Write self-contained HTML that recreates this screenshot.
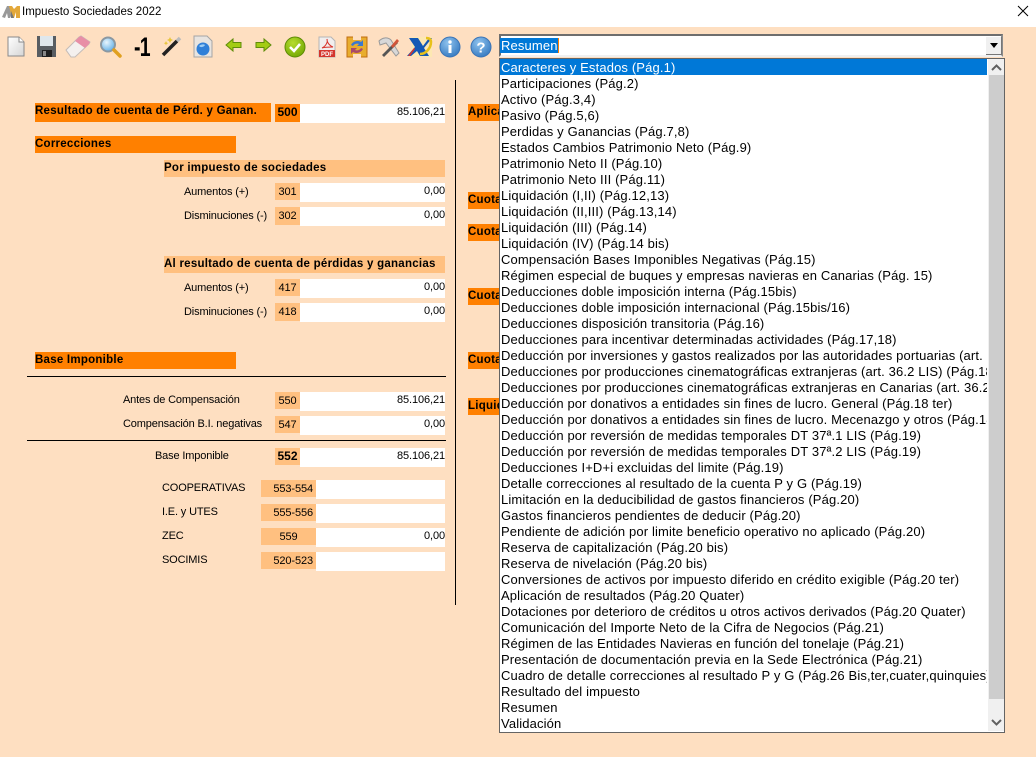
<!DOCTYPE html>
<html lang="es">
<head>
<meta charset="utf-8">
<title>Impuesto Sociedades 2022</title>
<style>
html,body{margin:0;padding:0}
body{width:1036px;height:758px;overflow:hidden;background:#fff;position:relative;font-family:"Liberation Sans",sans-serif;color:#000}
div{position:absolute;white-space:nowrap}
#bg{left:0;top:27px;width:1036px;height:730px;background:#FEDFC1}
.t{font-size:11px;line-height:18px;letter-spacing:-.15px}
.b{font-weight:bold;font-size:11.5px;letter-spacing:.25px}
.o{background:#FF8000}
.p{background:#FFC080}
.w{background:#fff;text-align:right;font-size:11px;line-height:17px;letter-spacing:-.1px}
.c{text-align:center;font-size:11px;line-height:18px;letter-spacing:-.1px}
.k{background:#000}
#list{left:499px;top:58px;height:673px;background:#fff;border:1px solid #646464;box-sizing:content-box;overflow:hidden;width:504px}
#rows{left:0;top:0;width:487px;height:672px;overflow:hidden}
#rows p{margin:0;height:16px;line-height:18px;padding-left:1px;font-size:13px;letter-spacing:.14px;white-space:nowrap}
#rows p.s{background:#0078D7;color:#fff}
</style>
</head>
<body>
<div id="bg"></div>

<svg style="position:absolute;left:2px;top:5px" width="19" height="14" viewBox="0 0 19 14"><path d="M0 12 5 1h3l3 6-3 6H6L5 8l-2 5z" fill="#999"/><path d="M7 1h3l2 3 3-3h3v12h-4V7l-2 6h-2z" fill="#e3a83a"/><path d="M9 6l3 7h-3z" fill="#777"/></svg>
<div style="left:22px;top:4px;font-size:11.5px;line-height:16px">Impuesto Sociedades 2022</div>
<svg style="position:absolute;left:1017px;top:5px" width="12" height="12" viewBox="0 0 12 12"><path d="M1 1l10 10M11 1 1 11" stroke="#000" stroke-width="1"/></svg>

<svg style="position:absolute;left:0;top:27px" width="500" height="36" viewBox="0 27 500 36">
<defs>
<linearGradient id="pg" x1="0" y1="0" x2="1" y2="1"><stop offset="0" stop-color="#fff"/><stop offset="1" stop-color="#d5d5d5"/></linearGradient>
<radialGradient id="blue" cx=".4" cy=".3" r=".8"><stop offset="0" stop-color="#8fc3ee"/><stop offset="1" stop-color="#2f74bd"/></radialGradient>
<radialGradient id="green" cx=".4" cy=".3" r=".8"><stop offset="0" stop-color="#b5dc2e"/><stop offset="1" stop-color="#6fa400"/></radialGradient>
<radialGradient id="lens" cx=".4" cy=".35" r=".7"><stop offset="0" stop-color="#e8f5fd"/><stop offset="1" stop-color="#5eaee6"/></radialGradient>
</defs>
<!-- new -->
<path d="M8 37h11l5 5v14H8z" fill="url(#pg)" stroke="#8a8a8a"/><path d="M19 37v5h5" fill="#fff" stroke="#8a8a8a"/>
<!-- save -->
<path d="M37 36h19v21H37z" fill="#585d62"/><rect x="40" y="36" width="13" height="10" fill="#dfe7ec"/><rect x="42" y="50" width="10" height="7" fill="#202020"/><rect x="43" y="51" width="3" height="5" fill="#888"/>
<!-- eraser -->
<path d="M66 50l13-13 2-1 9 6-1 2-14 13h-4z" fill="#f4f0ee" stroke="#c4bcb8"/><path d="M75 41l4-4 2-1 9 6-1 2-4 4z" fill="#e88ea6"/>
<!-- search -->
<circle cx="108" cy="44.500" r="7" fill="url(#lens)" stroke="#8b98a2" stroke-width="2"/><path d="M114 50l6 6" stroke="#e0a020" stroke-width="3.500" stroke-linecap="round"/>
<!-- wand -->
<path d="M163 55l14-14" stroke="#222" stroke-width="3.500"/><path d="M177 41l3-3" stroke="#bbb" stroke-width="3.500"/><path d="M170 37l1 2 2 1-2 1-1 2-1-2-2-1 2-1z" fill="#e8c53a"/><path d="M166 41l.7 1.500 1.500.7-1.500.7-.7 1.500-.7-1.500-1.500-.7 1.500-.7z" fill="#e8c53a"/>
<!-- globe doc -->
<path d="M194 36h13l5 5v16h-18z" fill="#e8e4e0" stroke="#a5a5a5"/><circle cx="203" cy="49" r="6.500" fill="#2f7fd8"/><path d="M199 46c2-2 5-2 6-1-1 2-4 3-6 1z" fill="#9dcdf4"/>
<!-- left arrow -->
<path d="M226 45l7-6v3.500h8v5h-8V51z" fill="#a4cc14" stroke="#5f8c0a"/>
<!-- right arrow -->
<path d="M271 45l-7-6v3.500h-8v5h8V51z" fill="#a4cc14" stroke="#5f8c0a"/>
<!-- check -->
<circle cx="295" cy="47" r="10" fill="url(#green)" stroke="#5d8a05"/><path d="M290 47l4 4 6-7" fill="none" stroke="#fff" stroke-width="2.500"/>
<!-- pdf -->
<path d="M319 37h12l4 4v16h-16z" fill="#f1eeee" stroke="#b5b5b5"/><path d="M322 48c4-2 6-6 5-9 0 4 3 7 6 8-4 0-8 0-11 1z" fill="none" stroke="#d8342c"/><rect x="319" y="50" width="16" height="7" fill="#d4352d"/>
<text x="327" y="56" font-family="Liberation Sans" font-weight="bold" font-size="6" fill="#fff" text-anchor="middle">PDF</text>
<!-- transfer -->
<rect x="347" y="37" width="20" height="20" fill="#e8ad2e" stroke="#c06c10"/><rect x="353" y="36" width="8" height="4" fill="#FEDFC1"/><rect x="353" y="54" width="8" height="4" fill="#FEDFC1"/><path d="M351 45c2-4 7-5 10-3l2-2v6h-6l2-2c-2-1-5 0-6 2z" fill="#3a78d0"/><path d="M363 49c-2 4-7 5-10 3l-2 2v-6h6l-2 2c2 1 5 0 6-2z" fill="#a84a6a"/>
<!-- tools -->
<path d="M379 41c4-4 9-4 12-1l8 13-3 3-10-13-3 1-3 1z" fill="#d8d8d8" stroke="#9a9a9a"/><path d="M382 55l14-14 2 2-14 14z" fill="#555"/><path d="M391 46l6-7 2 2-6 7z" fill="#d2553a"/>
<!-- AEAT -->
<rect x="412" y="37" width="20" height="20" fill="#fbeea8" opacity=".6"/><path d="M409 38h9l5 8 6-8h3l-8 10 5 8h-9l-3-5-6 5h-4l8-9z" fill="#1459b5"/><path d="M408 56l6-8 1 1-5 7z" fill="#d8342c"/><path d="M420 54c6 0 11-6 11-12 0-3-2-4-5-4" fill="none" stroke="#e8c11a" stroke-width="2.500"/>
<!-- info -->
<circle cx="450" cy="47" r="10" fill="url(#blue)" stroke="#3a73b5"/><circle cx="450" cy="42" r="1.700" fill="#fff"/><rect x="448.500" y="45" width="3" height="8" fill="#fff"/>
<!-- help -->
<circle cx="481" cy="47" r="10" fill="url(#blue)" stroke="#3a73b5"/>
<text x="481" y="52.500" font-family="Liberation Sans" font-weight="bold" font-size="15" fill="#fff" text-anchor="middle">?</text>
</svg>
<div style="left:134px;top:31px;font-size:27px;line-height:32px;font-weight:bold;letter-spacing:-1px;transform:scaleX(.72);transform-origin:left top">-1</div>

<!-- left form -->
<div class="o b" style="left:35px;top:103px;width:236px;height:19px;line-height:16px">Resultado de cuenta de Pérd. y Ganan.</div>
<div class="o c" style="left:275px;top:104px;width:25px;height:18px;font-weight:bold;font-size:12px;line-height:16px;letter-spacing:0">500</div>
<div class="w" style="left:300px;top:104px;width:145px;height:19px">85.106,21</div>

<div class="o b" style="left:35px;top:136px;width:201px;height:17px;line-height:16px">Correcciones</div>
<div class="p b" style="left:164px;top:160px;width:281px;height:17px;line-height:16px">Por impuesto de sociedades</div>
<div class="t" style="left:184px;top:183px">Aumentos (+)</div>
<div class="p c" style="left:275px;top:183px;width:25px;height:17px">301</div>
<div class="w" style="left:300px;top:183px;width:145px;height:19px">0,00</div>
<div class="t" style="left:184px;top:207px">Disminuciones (-)</div>
<div class="p c" style="left:275px;top:207px;width:25px;height:18px">302</div>
<div class="w" style="left:300px;top:207px;width:145px;height:19px">0,00</div>

<div class="p b" style="left:164px;top:256px;width:281px;height:17px;line-height:16px">Al resultado de cuenta de pérdidas y ganancias</div>
<div class="t" style="left:184px;top:279px">Aumentos (+)</div>
<div class="p c" style="left:275px;top:279px;width:25px;height:17px">417</div>
<div class="w" style="left:300px;top:279px;width:145px;height:19px">0,00</div>
<div class="t" style="left:184px;top:303px">Disminuciones (-)</div>
<div class="p c" style="left:275px;top:303px;width:25px;height:18px">418</div>
<div class="w" style="left:300px;top:303px;width:145px;height:19px">0,00</div>

<div class="o b" style="left:35px;top:352px;width:201px;height:17px;line-height:16px">Base Imponible</div>
<div class="k" style="left:27px;top:376px;width:419px;height:1px"></div>
<div class="t" style="left:123px;top:391px">Antes de Compensación</div>
<div class="p c" style="left:275px;top:392px;width:25px;height:17px">550</div>
<div class="w" style="left:300px;top:392px;width:145px;height:19px">85.106,21</div>
<div class="t" style="left:123px;top:415px">Compensación B.I. negativas</div>
<div class="p c" style="left:275px;top:416px;width:25px;height:17px">547</div>
<div class="w" style="left:300px;top:416px;width:145px;height:19px">0,00</div>
<div class="k" style="left:27px;top:440px;width:419px;height:1px"></div>
<div class="t" style="left:155px;top:447px">Base Imponible</div>
<div class="p c" style="left:275px;top:448px;width:25px;height:17px;font-weight:bold;font-size:12px;line-height:16px;letter-spacing:0">552</div>
<div class="w" style="left:300px;top:448px;width:145px;height:19px">85.106,21</div>

<div class="t" style="left:162px;top:479px">COOPERATIVAS</div>
<div class="p c" style="left:261px;top:480px;width:55px;height:17px;text-align:right"><span style="margin-right:3px">553-554</span></div>
<div class="w" style="left:316px;top:480px;width:129px;height:19px"></div>
<div class="t" style="left:162px;top:503px">I.E. y UTES</div>
<div class="p c" style="left:261px;top:504px;width:55px;height:17px;text-align:right"><span style="margin-right:3px">555-556</span></div>
<div class="w" style="left:316px;top:504px;width:129px;height:19px"></div>
<div class="t" style="left:162px;top:527px">ZEC</div>
<div class="p c" style="left:261px;top:528px;width:55px;height:17px">559</div>
<div class="w" style="left:316px;top:528px;width:129px;height:19px">0,00</div>
<div class="t" style="left:162px;top:551px">SOCIMIS</div>
<div class="p c" style="left:261px;top:552px;width:55px;height:17px;text-align:right"><span style="margin-right:3px">520-523</span></div>
<div class="w" style="left:316px;top:552px;width:129px;height:19px"></div>

<div class="k" style="left:455px;top:80px;width:1px;height:525px"></div>

<!-- right headers behind list -->
<div class="o b" style="left:468px;top:104px;width:40px;height:17px;line-height:16px">Aplicación</div>
<div class="o b" style="left:468px;top:192px;width:40px;height:17px;line-height:16px">Cuota</div>
<div class="o b" style="left:468px;top:224px;width:40px;height:17px;line-height:16px">Cuota</div>
<div class="o b" style="left:468px;top:288px;width:40px;height:17px;line-height:16px">Cuota</div>
<div class="o b" style="left:468px;top:352px;width:40px;height:17px;line-height:16px">Cuota</div>
<div class="o b" style="left:468px;top:398px;width:40px;height:17px;line-height:16px">Liquidación</div>

<!-- combo -->
<div style="left:499px;top:34px;width:504px;height:23px;background:#fff;border-top:2px solid #6e6e6e;border-left:2px solid #6e6e6e;border-right:2px solid #8c8c8c;border-bottom:2px solid #f0f0f0;box-sizing:border-box"></div>
<div style="left:500px;top:38px;width:59px;height:15px;padding-left:1px;box-sizing:border-box;background:#0078D7;color:#fff;font-size:13px;line-height:16px;letter-spacing:.14px;border-right:1px solid #FF8000;overflow:hidden">Resumen</div>
<div style="left:986px;top:37px;width:16px;height:18px;background:#f0f0f0;border-right:1px solid #777;border-bottom:1px solid #777;box-sizing:border-box"></div>
<svg style="position:absolute;left:990px;top:43px" width="9" height="6"><path d="M0 0h8L4 5z" fill="#000"/></svg>

<!-- dropdown -->
<div id="list">
<div id="rows">
<p class="s">Caracteres y Estados (Pág.1)</p>
<p>Participaciones (Pág.2)</p>
<p>Activo (Pág.3,4)</p>
<p>Pasivo (Pág.5,6)</p>
<p>Perdidas y Ganancias (Pág.7,8)</p>
<p>Estados Cambios Patrimonio Neto (Pág.9)</p>
<p>Patrimonio Neto II (Pág.10)</p>
<p>Patrimonio Neto III (Pág.11)</p>
<p>Liquidación (I,II) (Pág.12,13)</p>
<p>Liquidación (II,III) (Pág.13,14)</p>
<p>Liquidación (III) (Pág.14)</p>
<p>Liquidación (IV) (Pág.14 bis)</p>
<p>Compensación Bases Imponibles Negativas (Pág.15)</p>
<p>Régimen especial de buques y empresas navieras en Canarias (Pág. 15)</p>
<p>Deducciones doble imposición interna (Pág.15bis)</p>
<p>Deducciones doble imposición internacional (Pág.15bis/16)</p>
<p>Deducciones disposición transitoria (Pág.16)</p>
<p>Deducciones para incentivar determinadas actividades (Pág.17,18)</p>
<p>Deducción por inversiones y gastos realizados por las autoridades portuarias (art. 39 LIS)</p>
<p>Deducciones por producciones cinematográficas extranjeras (art. 36.2 LIS) (Pág.18)</p>
<p>Deducciones por producciones cinematográficas extranjeras en Canarias (art. 36.2 LIS)</p>
<p>Deducción por donativos a entidades sin fines de lucro. General (Pág.18 ter)</p>
<p>Deducción por donativos a entidades sin fines de lucro. Mecenazgo y otros (Pág.18)</p>
<p>Deducción por reversión de medidas temporales DT 37ª.1 LIS (Pág.19)</p>
<p>Deducción por reversión de medidas temporales DT 37ª.2 LIS (Pág.19)</p>
<p>Deducciones I+D+i excluidas del limite (Pág.19)</p>
<p>Detalle correcciones al resultado de la cuenta P y G (Pág.19)</p>
<p>Limitación en la deducibilidad de gastos financieros (Pág.20)</p>
<p>Gastos financieros pendientes de deducir (Pág.20)</p>
<p>Pendiente de adición por limite beneficio operativo no aplicado (Pág.20)</p>
<p>Reserva de capitalización (Pág.20 bis)</p>
<p>Reserva de nivelación (Pág.20 bis)</p>
<p>Conversiones de activos por impuesto diferido en crédito exigible (Pág.20 ter)</p>
<p>Aplicación de resultados (Pág.20 Quater)</p>
<p>Dotaciones por deterioro de créditos u otros activos derivados (Pág.20 Quater)</p>
<p>Comunicación del Importe Neto de la Cifra de Negocios (Pág.21)</p>
<p>Régimen de las Entidades Navieras en función del tonelaje (Pág.21)</p>
<p>Presentación de documentación previa en la Sede Electrónica (Pág.21)</p>
<p>Cuadro de detalle correcciones al resultado P y G (Pág.26 Bis,ter,cuater,quinquies)</p>
<p>Resultado del impuesto</p>
<p>Resumen</p>
<p>Validación</p>
</div>
<div style="left:488px;top:0;width:16px;height:672px;background:#f0f0f0"></div>
<div style="left:489px;top:16px;width:15px;height:624px;background:#cdcdcd"></div>
<svg style="position:absolute;left:491px;top:5px" width="11" height="7"><path d="M1 6l4.500-4.500L10 6" fill="none" stroke="#606060" stroke-width="2"/></svg>
<svg style="position:absolute;left:491px;top:660px" width="11" height="7"><path d="M1 1l4.500 4.500L10 1" fill="none" stroke="#606060" stroke-width="2"/></svg>
</div>
</body>
</html>
